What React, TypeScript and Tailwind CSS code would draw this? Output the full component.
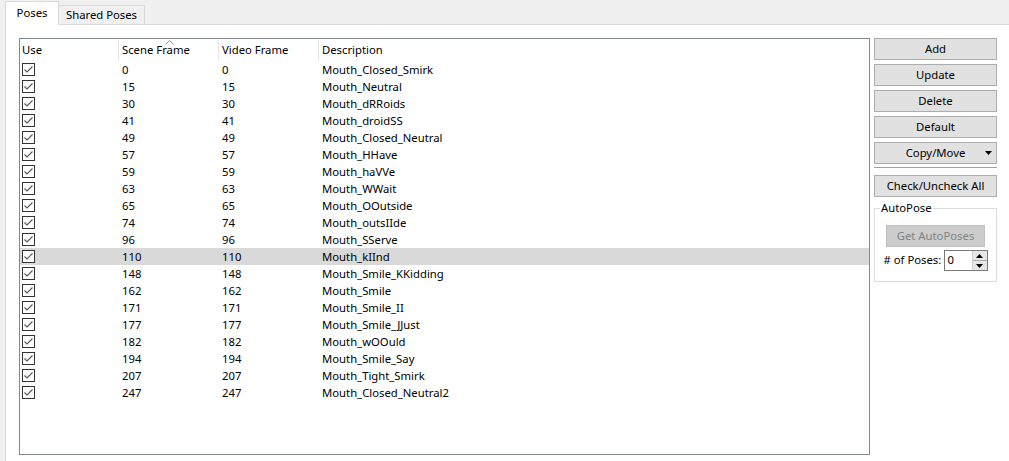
import React from "react";

const rows: [number, string][] = [
  [0, "Mouth_Closed_Smirk"],
  [15, "Mouth_Neutral"],
  [30, "Mouth_dRRoids"],
  [41, "Mouth_droidSS"],
  [49, "Mouth_Closed_Neutral"],
  [57, "Mouth_HHave"],
  [59, "Mouth_haVVe"],
  [63, "Mouth_WWait"],
  [65, "Mouth_OOutside"],
  [74, "Mouth_outsIIde"],
  [96, "Mouth_SServe"],
  [110, "Mouth_kIInd"],
  [148, "Mouth_Smile_KKidding"],
  [162, "Mouth_Smile"],
  [171, "Mouth_Smile_II"],
  [177, "Mouth_Smile_JJust"],
  [182, "Mouth_wOOuld"],
  [194, "Mouth_Smile_Say"],
  [207, "Mouth_Tight_Smirk"],
  [247, "Mouth_Closed_Neutral2"],
];

function Check() {
  return (
    <div className="w-[13px] h-[13px] border border-[#333333] bg-white flex items-center justify-center">
      <svg width="11" height="11" viewBox="0 0 11 11">
        <path d="M1.5 5.5 L4 8 L9.5 2.5" fill="none" stroke="#555555" strokeWidth="1.1" />
      </svg>
    </div>
  );
}

function Btn({ children, dropdown }: { children: React.ReactNode; dropdown?: boolean }) {
  return (
    <div className="relative h-[22px] w-[123px] border border-[#adadad] bg-[#e1e1e1] flex items-center justify-center whitespace-nowrap">
      <span>{children}</span>
      {dropdown && (
        <svg className="absolute right-[4px] top-[8px]" width="7" height="4" viewBox="0 0 7 4">
          <path d="M0 0 H7 L3.5 4 Z" fill="#000" />
        </svg>
      )}
    </div>
  );
}

export default function App() {
  return (
    <div
      className="w-[1009px] h-[461px] bg-[#f0f0f0] flex flex-col pl-[5px] text-[11.3px] text-black overflow-hidden whitespace-nowrap"
      style={{ fontFamily: '"Noto Sans", "Open Sans", sans-serif' }}
    >
      {/* tabs */}
      <div className="h-[25px] flex items-end border-b border-[#d9d9d9] shrink-0">
        <div className="h-[24px] w-[54px] bg-white border border-b-0 border-[#d9d9d9] -mb-px flex items-center justify-center pb-[1px]">
          Poses
        </div>
        <div className="h-[19px] w-[86px] bg-[#f0f0f0] border border-l-0 border-b-0 border-[#d9d9d9] flex items-center justify-center">
          Shared Poses
        </div>
      </div>

      {/* content */}
      <div className="flex-1 bg-white border-l border-[#d9d9d9] flex items-start pt-[13px] pl-[13px] gap-[4px]">
        {/* list */}
        <div className="w-[851px] h-[417px] border border-[#828790] bg-white flex flex-col">
          <div className="h-[22px] flex shrink-0 pt-[1px]">
            <div className="w-[99px] border-r border-[#e5e5e5] pl-[2px] flex items-center">Use</div>
            <div className="relative w-[100px] border-r border-[#e5e5e5] pl-[3px] flex items-center">
              Scene Frame
              <svg className="absolute left-[46px] top-[0px]" width="9" height="5" viewBox="0 0 9 5">
                <path d="M0.5 4.5 L4.5 0.5 L8.5 4.5" fill="none" stroke="#9a9a9a" strokeWidth="1" />
              </svg>
            </div>
            <div className="w-[100px] border-r border-[#e5e5e5] pl-[3px] flex items-center">Video Frame</div>
            <div className="flex-1 pl-[3px] flex items-center">Description</div>
          </div>
          {rows.map(([n, d], i) => (
            <div key={i} className={`h-[17px] flex items-center ${i === 11 ? "bg-[#d9d9d9]" : ""}`}>
              <div className="w-[100px] pl-[2px] flex items-center">
                <Check />
              </div>
              <div className="w-[100px] pl-[2px] pt-[1px]">{n}</div>
              <div className="w-[100px] pl-[2px] pt-[1px]">{n}</div>
              <div className="flex-1 pl-[2px] pt-[1px]">{d}</div>
            </div>
          ))}
        </div>

        {/* buttons */}
        <div className="flex flex-col w-[123px]">
          <div className="flex flex-col gap-[4px]">
            <Btn>Add</Btn>
            <Btn>Update</Btn>
            <Btn>Delete</Btn>
            <Btn>Default</Btn>
            <Btn dropdown>Copy/Move</Btn>
          </div>
          <div className="mt-[3px] border-t border-[#a0a0a0] border-b border-b-white" />
          <div className="mt-[6px]">
            <Btn>Check/Uncheck All</Btn>
          </div>
          <div className="relative mt-[11px] h-[74px] w-[123px] border border-[#dcdcdc] flex flex-col items-center pt-[16px]">
            <span className="absolute left-[5px] top-[-10px] bg-white px-[1px] leading-[18px]">AutoPose</span>
            <div className="h-[22px] w-[99px] border border-[#bfbfbf] bg-[#cccccc] text-[#838383] flex items-center justify-center">
              Get AutoPoses
            </div>
            <div className="mt-[3px] w-[104px] flex items-center justify-between">
              <span># of Poses:</span>
              <div className="h-[21px] w-[44px] border border-[#7a7a7a] bg-white flex items-stretch">
                <div className="flex-1 pl-[3px] flex items-center">0</div>
                <div className="w-[15px] flex flex-col border-l border-[#d0d0d0]">
                  <div className="flex-1 flex items-center justify-center bg-[#e6e6e6] border-b border-[#b0b0b0]">
                    <svg width="7" height="4" viewBox="0 0 7 4"><path d="M0 4 H7 L3.5 0 Z" fill="#000" /></svg>
                  </div>
                  <div className="flex-1 flex items-center justify-center bg-[#e6e6e6]">
                    <svg width="7" height="4" viewBox="0 0 7 4"><path d="M0 0 H7 L3.5 4 Z" fill="#000" /></svg>
                  </div>
                </div>
              </div>
            </div>
          </div>
        </div>
      </div>
    </div>
  );
}
